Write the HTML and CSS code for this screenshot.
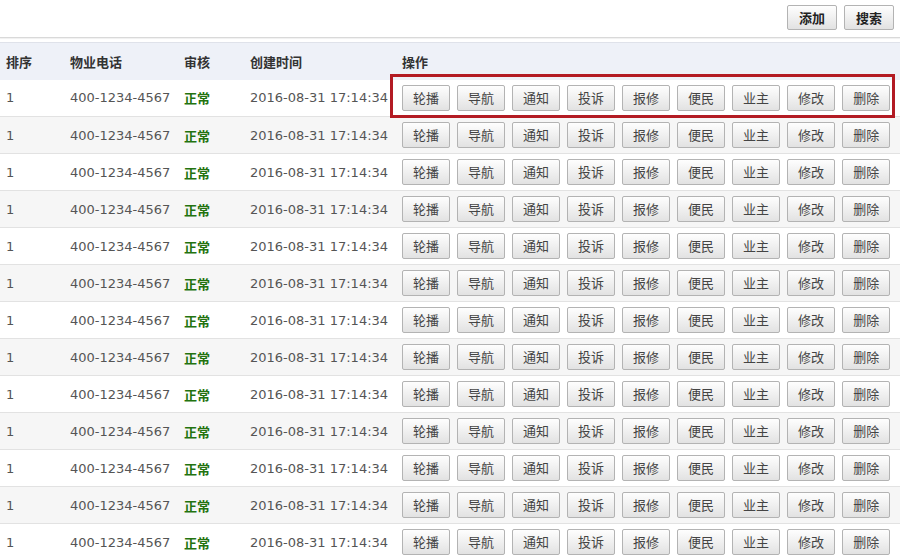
FILE: index.html
```html
<!DOCTYPE html>
<html lang="zh-CN">
<head>
  <meta charset="UTF-8" />
  <title>物业列表</title>
  <link rel="stylesheet" href="styles.css">
</head>
<body>
  <div class="toolbar">
    <button class="btn btn-strong">添加</button>
    <button class="btn btn-strong">搜索</button>
  </div>
  <div class="divider"></div>

  <div class="list-wrap">
    <table class="list">
      <thead>
        <tr>
          <th class="col-sort">排序</th>
          <th class="col-phone">物业电话</th>
          <th class="col-status">审核</th>
          <th class="col-time">创建时间</th>
          <th>操作</th>
        </tr>
      </thead>
      <tbody id="rows"></tbody>
    </table>
    <!-- highlight box drawn over the first row -->
    <div class="highlight"></div>
  </div>

  <template id="rowTpl">
    <tr>
      <td>1</td>
      <td>400-1234-4567</td>
      <td class="status">正常</td>
      <td>2016-08-31 17:14:34</td>
      <td class="ops">
        <button class="btn">轮播</button>
        <button class="btn">导航</button>
        <button class="btn">通知</button>
        <button class="btn">投诉</button>
        <button class="btn">报修</button>
        <button class="btn">便民</button>
        <button class="btn">业主</button>
        <button class="btn">修改</button>
        <button class="btn">删除</button>
      </td>
    </tr>
  </template>

  <script>
    var tpl = document.getElementById('rowTpl');
    var body = document.getElementById('rows');
    for (var i = 0; i < 13; i++) {
      body.appendChild(tpl.content.cloneNode(true));
    }
  </script>
</body>
</html>
```

FILE: styles.css
```css
* {
  box-sizing: border-box;
}

body {
  margin: 0;
  padding: 0;
  background: #ffffff;
  color: #555;
  font-family: "DejaVu Sans", "Noto Sans CJK SC", sans-serif;
  font-size: 13px;
}

.toolbar {
  display: flex;
  justify-content: flex-end;
  gap: 7px;
  padding: 5px 6px 0;
}

.divider {
  margin-top: 7px;
  border-top: 1px solid #d9d9d9;
  box-shadow: 0 1px 1px #eeeeee;
}

.btn {
  height: 26px;
  padding: 0 10px;
  border: 1px solid #b3b3b3;
  border-radius: 2px;
  background: linear-gradient(#fefefe, #e2e2e2);
  color: #444;
  font-family: "Noto Sans CJK SC", sans-serif;
  font-size: 13px;
  line-height: 24px;
  cursor: pointer;
}

.btn-strong {
  height: 25px;
  width: 50px;
  padding: 0;
  font-weight: bold;
  color: #222;
}

.list-wrap {
  position: relative;
  margin-top: 4px;
}

.list {
  width: 100%;
  border-collapse: collapse;
}

.list th,
.list td {
  height: 37px;
  padding: 0 0 0 6px;
  text-align: left;
  vertical-align: middle;
  white-space: nowrap;
}

.list th {
  background: #eef1f8;
  border-top: 1px solid #dfe2ea;
  color: #333;
  font-family: "Noto Sans CJK SC", sans-serif;
  font-weight: bold;
  font-size: 13px;
}

.list td {
  border-bottom: 1px solid #e2e2e2;
}

.list tbody tr:nth-child(even) td {
  background: #f6f6f6;
}

.col-sort { width: 64px; }
.col-phone { width: 114px; }
.col-status { width: 66px; }
.col-time { width: 152px; }

.status {
  color: #23730f;
  font-family: "Noto Sans CJK SC", sans-serif;
  font-weight: bold;
}

.ops {
  display: flex;
  align-items: center;
  gap: 7px;
}

.highlight {
  position: absolute;
  left: 390px;
  top: 32px;
  width: 505px;
  height: 44px;
  border: 3px solid #b31b23;
  pointer-events: none;
}
```
